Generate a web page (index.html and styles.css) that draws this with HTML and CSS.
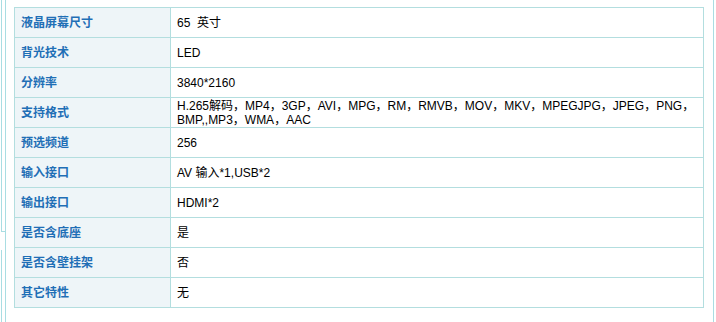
FILE: index.html
```html
<!DOCTYPE html>
<html>
<head>
<meta charset="utf-8">
<link rel="stylesheet" href="styles.css">
</head>
<body>
<div class="page">
  <div class="gutter">
    <div class="frag frag-top"></div>
    <div class="frag frag-bottom"></div>
  </div>
  <div class="panel">
    <table class="spec">
      <tr><th>液晶屏幕尺寸</th><td>65&nbsp; 英寸</td></tr>
      <tr><th>背光技术</th><td>LED</td></tr>
      <tr><th>分辨率</th><td>3840*2160</td></tr>
      <tr><th>支持格式</th><td>H.265解码，MP4，3GP，AVI，MPG，RM，RMVB，MOV，MKV，MPEGJPG，JPEG，PNG，BMP,,MP3，WMA，AAC</td></tr>
      <tr><th>预选频道</th><td>256</td></tr>
      <tr><th>输入接口</th><td>AV 输入*1,USB*2</td></tr>
      <tr><th>输出接口</th><td>HDMI*2</td></tr>
      <tr><th>是否含底座</th><td>是</td></tr>
      <tr><th>是否含壁挂架</th><td>否</td></tr>
      <tr><th>其它特性</th><td>无</td></tr>
    </table>
  </div>
</div>
</body>
</html>
```
FILE: styles.css
```css
html, body {
  margin: 0;
  padding: 0;
  background: #fff;
}
body {
  font-family: "Liberation Sans", Arial, "Noto Sans CJK SC", sans-serif;
  font-size: 12px;
  color: #000;
}
.page {
  display: flex;
  height: 322px;
  overflow: hidden;
}
.gutter {
  width: 5px;
  display: flex;
  flex-direction: column;
}
.frag {
  margin-left: 1px;
  border-left: 1px solid #a9dde2;
}
.frag-top {
  height: 231px;
  border-bottom: 1px solid #a9dde2;
}
.frag-bottom {
  margin-top: 18px;
  flex: 1;
}
.panel {
  width: 709px;
  border-left: 1px solid #a9dde2;
  border-right: 1px solid #a9dde2;
  padding: 7px 0 0 8px;
  box-sizing: border-box;
}
.spec {
  border-collapse: collapse;
  width: 690px;
  line-height: 14px;
}
.spec th, .spec td {
  border: 1px solid #b3dedf;
  height: 29px;
  padding: 0 6px;
  vertical-align: middle;
  text-align: left;
}
.spec th {
  width: 143px;
  background: #eef5f8;
  color: #1f6fb6;
  font-weight: bold;
}
.spec td {
  background: #fff;
}
```
